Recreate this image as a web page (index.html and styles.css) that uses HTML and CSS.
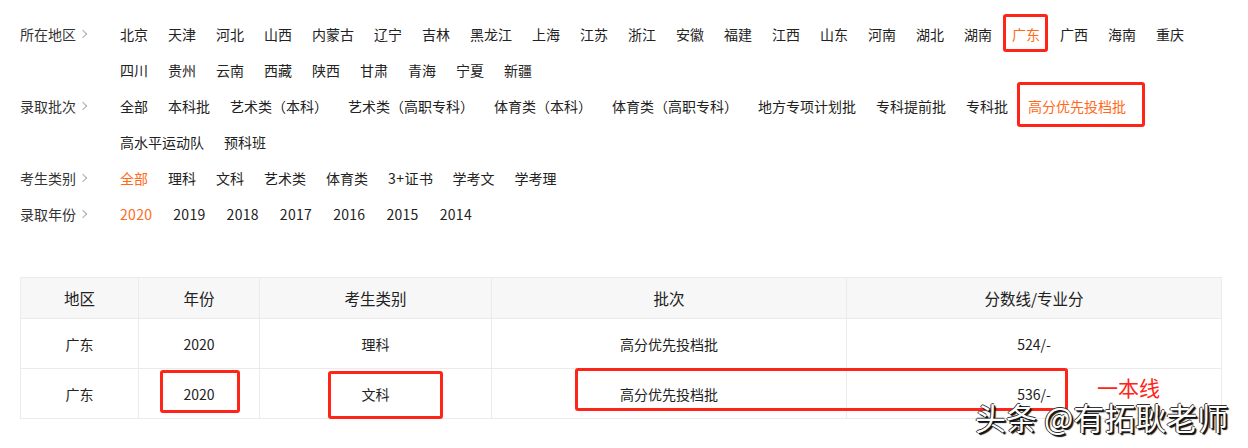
FILE: index.html
```html
<!DOCTYPE html>
<html lang="zh-CN">
<head>
<meta charset="utf-8">
<title>分数线</title>
<link rel="stylesheet" href="styles.css">
</head>
<body>
<div class="page">
  <div class="filters">
    <div class="frow">
      <div class="flabel">所在地区<span class="chev"></span></div>
      <div class="items">
        <span>北京</span><span>天津</span><span>河北</span><span>山西</span><span>内蒙古</span><span>辽宁</span><span>吉林</span><span>黑龙江</span><span>上海</span><span>江苏</span><span>浙江</span><span>安徽</span><span>福建</span><span>江西</span><span>山东</span><span>河南</span><span>湖北</span><span>湖南</span><span class="on">广东</span><span>广西</span><span>海南</span><span>重庆</span><span>四川</span><span>贵州</span><span>云南</span><span>西藏</span><span>陕西</span><span>甘肃</span><span>青海</span><span>宁夏</span><span>新疆</span>
      </div>
    </div>
    <div class="frow">
      <div class="flabel">录取批次<span class="chev"></span></div>
      <div class="items">
        <span>全部</span><span>本科批</span><span>艺术类（本科）</span><span>艺术类（高职专科）</span><span>体育类（本科）</span><span>体育类（高职专科）</span><span>地方专项计划批</span><span>专科提前批</span><span>专科批</span><span class="on">高分优先投档批</span><span>高水平运动队</span><span>预科班</span>
      </div>
    </div>
    <div class="frow">
      <div class="flabel">考生类别<span class="chev"></span></div>
      <div class="items">
        <span class="on">全部</span><span>理科</span><span>文科</span><span>艺术类</span><span>体育类</span><span class="cert">3+证书</span><span>学考文</span><span>学考理</span>
      </div>
    </div>
    <div class="frow">
      <div class="flabel">录取年份<span class="chev"></span></div>
      <div class="items years">
        <span class="on">2020</span><span>2019</span><span>2018</span><span>2017</span><span>2016</span><span>2015</span><span>2014</span>
      </div>
    </div>
  </div>

  <table class="scores">
    <colgroup>
      <col class="c1"><col class="c2"><col class="c3"><col class="c4"><col class="c5">
    </colgroup>
    <thead>
      <tr><th>地区</th><th>年份</th><th>考生类别</th><th>批次</th><th>分数线/专业分</th></tr>
    </thead>
    <tbody>
      <tr><td>广东</td><td>2020</td><td>理科</td><td>高分优先投档批</td><td>524/-</td></tr>
      <tr><td>广东</td><td>2020</td><td>文科</td><td>高分优先投档批</td><td>536/-</td></tr>
    </tbody>
  </table>

  <div class="mark m-gd"></div>
  <div class="mark m-gf"></div>
  <div class="mark m-year"></div>
  <div class="mark m-wk"></div>
  <div class="mark m-row"></div>
  <div class="note">一本线</div>
  <div class="watermark">头条 @有拓耿老师</div>
</div>
</body>
</html>
```

FILE: styles.css
```css
* { box-sizing: border-box; }
html, body { margin: 0; padding: 0; background: #fff; }
body {
  font-family: "Noto Sans CJK SC", "Noto Sans", sans-serif;
  font-size: 14px;
  color: #333;
  width: 1248px;
  height: 448px;
  overflow: hidden;
}
.page { position: relative; padding: 16px 28px 0 20px; }

.frow { display: flex; align-items: flex-start; }
.flabel {
  width: 100px;
  flex: none;
  line-height: 36px;
  color: #333;
  display: flex;
  align-items: center;
}
.chev {
  display: inline-block;
  width: 6px;
  height: 6px;
  border-top: 1px solid #aaa;
  border-right: 1px solid #aaa;
  transform: rotate(45deg);
  margin-left: 4px;
}
.items {
  flex: 1;
  display: flex;
  flex-wrap: wrap;
  line-height: 36px;
  color: #222;
}
.items span { margin-right: 20px; white-space: nowrap; }
.items .on { color: #ff6a1a; }
.items .cert { letter-spacing: 0.5px; margin-right: 19px; }
.years span { margin-right: 21px; letter-spacing: 0.3px; }

.scores {
  margin-top: 45px;
  width: 1201px;
  border-collapse: collapse;
  table-layout: fixed;
  text-align: center;
  color: #222;
}
.c1 { width: 118px; }
.c2 { width: 121px; }
.c3 { width: 232px; }
.c4 { width: 355px; }
.c5 { width: 375px; }
.scores th, .scores td { border: 1px solid #ebebeb; padding: 0; }
.scores th {
  background: #f7f7f7;
  font-weight: normal;
  font-size: 15.5px;
  height: 41px;
}
.scores td { height: 50px; font-size: 14px; }

.mark {
  position: absolute;
  border: 3px solid #ff2418;
  border-radius: 3px;
}
.m-gd { left: 1003px; top: 14px; width: 45px; height: 38px; }
.m-gf { left: 1017px; top: 82px; width: 128px; height: 45px; }
.m-year { left: 160px; top: 370px; width: 80px; height: 43px; }
.m-wk { left: 328px; top: 371px; width: 115px; height: 48px; }
.m-row { left: 575px; top: 368px; width: 493px; height: 43px; }

.note {
  position: absolute;
  left: 1097px;
  top: 372px;
  font-size: 21px;
  line-height: 30px;
  color: #ff2418;
}
.watermark {
  position: absolute;
  left: 975px;
  top: 397px;
  font-size: 31px;
  line-height: 40px;
  color: #fff;
  white-space: nowrap;
  text-shadow: 1px 1px 0 #111, 2px 2px 1px #111, -1px 0 0 #333, 0 -1px 0 #333;
}
```
